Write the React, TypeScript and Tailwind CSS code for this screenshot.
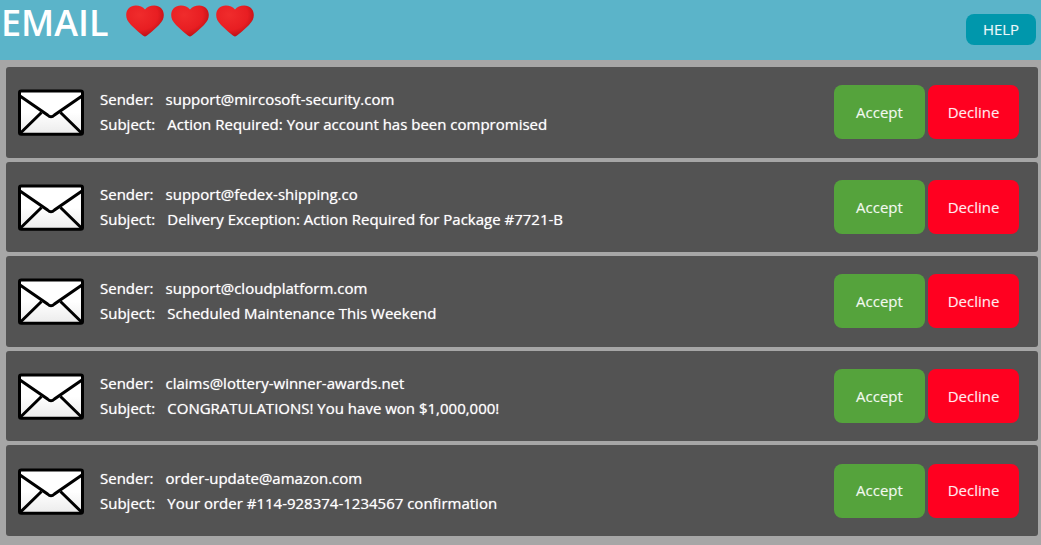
import React from "react";

type Email = {
  sender: string;
  subject: string;
};

const emails: Email[] = [
  {
    sender: "support@mircosoft-security.com",
    subject: "Action Required: Your account has been compromised",
  },
  {
    sender: "support@fedex-shipping.co",
    subject: "Delivery Exception: Action Required for Package #7721-B",
  },
  {
    sender: "support@cloudplatform.com",
    subject: "Scheduled Maintenance This Weekend",
  },
  {
    sender: "claims@lottery-winner-awards.net",
    subject: "CONGRATULATIONS! You have won $1,000,000!",
  },
  {
    sender: "order-update@amazon.com",
    subject: "Your order #114-928374-1234567 confirmation",
  },
];

const LIVES = 3;

const Heart = () => (
  <svg className="w-[38px] h-8" viewBox="0 0 38 32" aria-hidden="true">
    <defs>
      <radialGradient id="heart-fill" cx="0.35" cy="0.3" r="0.75">
        <stop offset="0" stopColor="#f02c2c" />
        <stop offset="0.65" stopColor="#e81e22" />
        <stop offset="1" stopColor="#b80f14" />
      </radialGradient>
    </defs>
    <path
      d="M19 31.6C17.5 31.2 10.5 25.5 5 20C1.5 16.2 0.2 13.5 0.2 10C0.2 4.4 4.4 0.6 9.8 0.6C13.6 0.6 17 2 19 4.6C21 2 24.4 0.6 28.2 0.6C33.6 0.6 37.8 4.4 37.8 10C37.8 13.5 36.5 16.2 33 20C27.5 25.5 20.5 31.2 19 31.6Z"
      fill="url(#heart-fill)"
    />
  </svg>
);

const Envelope = () => (
  <svg className="w-[66px] h-12 shrink-0" viewBox="0 0 66 48" aria-hidden="true">
    <defs>
      <linearGradient id="paper" x1="0" y1="0" x2="0" y2="1">
        <stop offset="0.5" stopColor="#ffffff" />
        <stop offset="1" stopColor="#ebebeb" />
      </linearGradient>
    </defs>
    <rect
      x="1.5"
      y="2.9"
      width="63"
      height="43.4"
      rx="1.8"
      fill="url(#paper)"
      stroke="#000"
      strokeWidth="3"
    />
    <path
      d="M2 45.5L23.5 24.5M64 45.5L42.5 24.5"
      fill="none"
      stroke="#000"
      strokeWidth="3"
    />
    <path
      d="M2 8L29.5 27Q33 30.5 36.5 27L64 8"
      fill="none"
      stroke="#000"
      strokeWidth="3"
    />
  </svg>
);

const EmailRow = ({ email }: { email: Email }) => (
  <li className="flex flex-1 items-center gap-4 rounded-[3px] bg-[#535353] py-[18px] pl-3 pr-[19px]">
    <Envelope />
    <dl className="min-w-0 flex-1 text-[15px] leading-[25px] [text-shadow:0_0_1px_rgba(255,255,255,0.7)]">
      <div className="flex gap-3">
        <dt>Sender:</dt>
        <dd>{email.sender}</dd>
      </div>
      <div className="flex gap-3">
        <dt>Subject:</dt>
        <dd>{email.subject}</dd>
      </div>
    </dl>
    <div className="flex gap-[3px] text-[15px] text-white/90">
      <button
        type="button"
        className="h-[54px] w-[91px] rounded-lg bg-[#55a33c] [text-shadow:0_0_1px_rgba(255,255,255,0.3)]"
      >
        Accept
      </button>
      <button
        type="button"
        className="h-[54px] w-[91px] rounded-lg bg-[#ff0020] [text-shadow:0_0_1px_rgba(255,255,255,0.3)]"
      >
        Decline
      </button>
    </div>
  </li>
);

const App = () => {
  return (
    <div className="flex min-h-screen flex-col bg-[#a6a6a6] font-['Open_Sans',sans-serif] text-white">
      <header className="flex h-[60px] items-start justify-between bg-[#5bb4c9] pr-[5px]">
        <div className="flex items-start gap-[17px]">
          <h1 className="pl-px text-4xl leading-[46px] font-semibold">EMAIL</h1>
          <div
            className="flex gap-[7px] pt-[5px]"
            role="img"
            aria-label={`${LIVES} lives`}
          >
            {Array.from({ length: LIVES }, (_, i) => (
              <Heart key={i} />
            ))}
          </div>
        </div>
        <button
          type="button"
          className="mt-[14px] h-[31px] w-[70px] rounded-lg bg-[#0097ac] text-[15px] text-white/90 [text-shadow:0_0_1px_rgba(255,255,255,0.3)]"
        >
          HELP
        </button>
      </header>

      <ul className="flex flex-1 flex-col gap-1 pt-[7px] pr-[3px] pb-[9px] pl-[6px]">
        {emails.map((email) => (
          <EmailRow key={email.sender} email={email} />
        ))}
      </ul>
    </div>
  );
};

export default App;
